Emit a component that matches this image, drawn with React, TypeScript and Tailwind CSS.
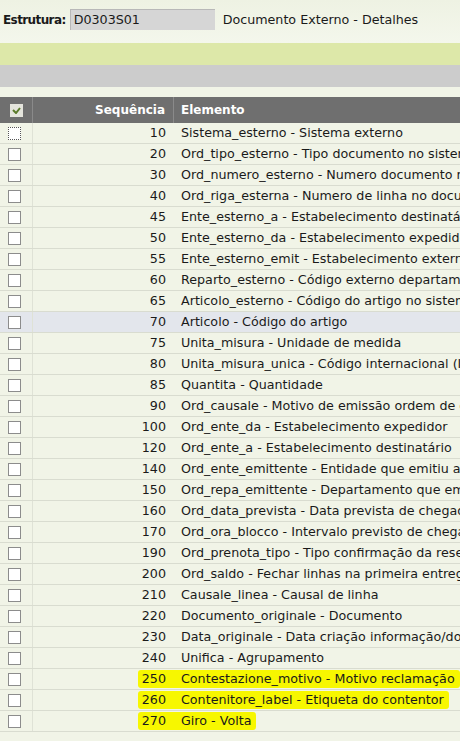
import React from "react";

type Row = { seq: number; text: string; hover?: boolean; mark?: boolean };

const rows: Row[] = [
    { seq: 10, text: "Sistema_esterno - Sistema externo" },
    { seq: 20, text: "Ord_tipo_esterno - Tipo documento no sistema externo" },
    { seq: 30, text: "Ord_numero_esterno - Numero documento no sistema externo" },
    { seq: 40, text: "Ord_riga_esterna - Numero de linha no documento externo" },
    { seq: 45, text: "Ente_esterno_a - Estabelecimento destinatário externo" },
    { seq: 50, text: "Ente_esterno_da - Estabelecimento expedidor externo" },
    { seq: 55, text: "Ente_esterno_emit - Estabelecimento externo emitente" },
    { seq: 60, text: "Reparto_esterno - Código externo departamento" },
    { seq: 65, text: "Articolo_esterno - Código do artigo no sistema externo" },
    { seq: 70, text: "Articolo - Código do artigo", hover: true },
    { seq: 75, text: "Unita_misura - Unidade de medida" },
    { seq: 80, text: "Unita_misura_unica - Código internacional (ISO)" },
    { seq: 85, text: "Quantita - Quantidade" },
    { seq: 90, text: "Ord_causale - Motivo de emissão ordem de compra" },
    { seq: 100, text: "Ord_ente_da - Estabelecimento expedidor" },
    { seq: 120, text: "Ord_ente_a - Estabelecimento destinatário" },
    { seq: 140, text: "Ord_ente_emittente - Entidade que emitiu a ordem" },
    { seq: 150, text: "Ord_repa_emittente - Departamento que emitiu" },
    { seq: 160, text: "Ord_data_prevista - Data prevista de chegada" },
    { seq: 170, text: "Ord_ora_blocco - Intervalo previsto de chegada" },
    { seq: 190, text: "Ord_prenota_tipo - Tipo confirmação da reserva" },
    { seq: 200, text: "Ord_saldo - Fechar linhas na primeira entrega" },
    { seq: 210, text: "Causale_linea - Causal de linha" },
    { seq: 220, text: "Documento_originale - Documento" },
    { seq: 230, text: "Data_originale - Data criação informação/documento" },
    { seq: 240, text: "Unifica - Agrupamento" },
    { seq: 250, text: "Contestazione_motivo - Motivo reclamação", mark: true },
    { seq: 260, text: "Contenitore_label - Etiqueta do contentor", mark: true },
    { seq: 270, text: "Giro - Volta", mark: true },
];

function CheckBox({ focused }: { focused?: boolean }) {
    return (
        <span
            className={
                "block h-[13px] w-[13px] bg-white " +
                (focused ? "border border-dotted border-[#555]" : "border border-[#8c8c8c]")
            }
        />
    );
}

export default function App() {
    return (
        <div
            className="h-[741px] w-[460px] overflow-hidden bg-[#f1f4e7] text-[12.7px] text-[#1a1a1a]"
            style={{ fontFamily: '"DejaVu Sans", Verdana, sans-serif' }}
        >
            {/* top bar */}
            <div className="flex h-[43px] items-center bg-gradient-to-b from-[#eef2e3] to-[#f4f7ec] pl-[3px] pb-[4px]">
                <span className="text-[12px] font-bold tracking-[-0.6px]">Estrutura:</span>
                <div className="ml-[4px] flex h-[21px] w-[145px] items-center border-t border-l border-[#b8b8b8] bg-[#d6d6d6] pl-[3px]">
                    D0303S01
                </div>
                <span className="ml-[8px]">Documento Externo - Detalhes</span>
            </div>
            <div className="h-[22px] bg-[#dde8a9]" />
            <div className="h-[22px] bg-[#cccccc]" />
            <div className="h-[10px]" />

            {/* table */}
            <div className="w-[640px]">
                <div className="flex h-[26px] bg-[#6f6f6f] text-[12px] font-bold text-white">
                    <div className="flex w-[33px] items-center justify-center border-r border-[#8a8a8a]">
                        <span className="flex h-[13px] w-[13px] items-center justify-center bg-[#e4e4dc]">
                            <svg width="9" height="7" viewBox="0 0 9 7">
                                <path d="M1 3 L4 6 L8 1" stroke="#5a7a2a" strokeWidth="2" fill="none" />
                            </svg>
                        </span>
                    </div>
                    <div className="flex w-[141px] items-center justify-end border-r border-[#8a8a8a] pr-[8px]">Sequência</div>
                    <div className="flex items-center pl-[7px]">Elemento</div>
                </div>

                {rows.map((r, i) => (
                    <div
                        key={r.seq}
                        className={"flex h-[21px] border-b border-[#d9dcd0] " + (r.hover ? "bg-[#e3e6ec]" : "")}
                    >
                        <div className="flex w-[33px] items-center justify-center border-r border-[#dfe2d6] pr-[4px]">
                            <CheckBox focused={i === 0} />
                        </div>
                        <div className="flex w-[141px] items-center justify-end pr-[8px]">
                            <span className={r.mark ? "-mr-[8px] rounded-l-[3px] bg-[#f7f700] pl-[4px] pr-[8px] leading-[18px]" : ""}>
                                {r.seq}
                            </span>
                        </div>
                        <div className="flex items-center whitespace-nowrap">
                            <span className={r.mark ? "rounded-r-[3px] bg-[#f7f700] pl-[7px] pr-[5px] leading-[18px]" : "pl-[7px]"}>
                                {r.text}
                            </span>
                        </div>
                    </div>
                ))}
            </div>
        </div>
    );
}
